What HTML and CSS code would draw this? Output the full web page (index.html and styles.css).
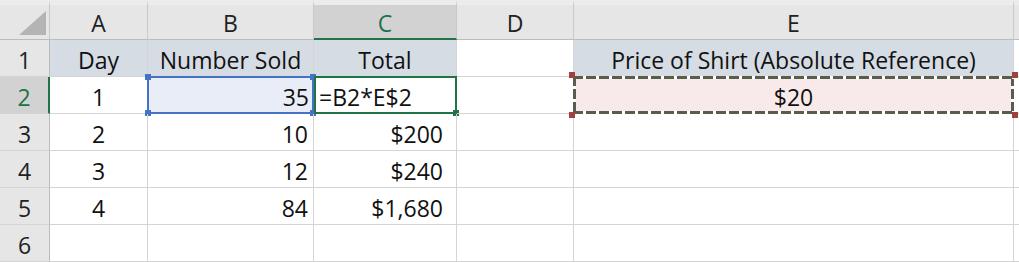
FILE: index.html
```
<!DOCTYPE html>
<html lang="en">
  <head>
    <meta charset="UTF-8" />
    <title>Shirt Sales</title>
    <link rel="stylesheet" href="styles.css">
  </head>
  <body>
    <div id="sheet">
      <div class="corner"><span class="tri"></span></div>
      <div class="colhead">A</div>
      <div class="colhead">B</div>
      <div class="colhead active">C</div>
      <div class="colhead">D</div>
      <div class="colhead">E</div>
      <div class="colhead"></div>

      <div class="rowhead">1</div>
      <div class="cell title center">Day</div>
      <div class="cell title center">Number Sold</div>
      <div class="cell title center">Total</div>
      <div class="cell"></div>
      <div class="cell title center">Price of Shirt (Absolute Reference)</div>
      <div class="cell"></div>

      <div class="rowhead active">2</div>
      <div class="cell center">1</div>
      <div class="cell num ref">35
        <span class="knob tl"></span><span class="knob tr"></span>
        <span class="knob bl"></span><span class="knob br"></span>
      </div>
      <div class="cell editing">=B2*E$2<span class="knob br"></span></div>
      <div class="cell"></div>
      <div class="cell center copied">$20
        <span class="knob tl"></span><span class="knob tr"></span>
        <span class="knob bl"></span><span class="knob br"></span>
      </div>
      <div class="cell"></div>

      <div class="rowhead">3</div>
      <div class="cell center">2</div>
      <div class="cell num">10</div>
      <div class="cell num money">$200</div>
      <div class="cell"></div>
      <div class="cell"></div>
      <div class="cell"></div>

      <div class="rowhead">4</div>
      <div class="cell center">3</div>
      <div class="cell num">12</div>
      <div class="cell num money">$240</div>
      <div class="cell"></div>
      <div class="cell"></div>
      <div class="cell"></div>

      <div class="rowhead">5</div>
      <div class="cell center">4</div>
      <div class="cell num">84</div>
      <div class="cell num money">$1,680</div>
      <div class="cell"></div>
      <div class="cell"></div>
      <div class="cell"></div>

      <div class="rowhead">6</div>
      <div class="cell"></div>
      <div class="cell"></div>
      <div class="cell"></div>
      <div class="cell"></div>
      <div class="cell"></div>
      <div class="cell"></div>
    </div>
  </body>
</html>
```

FILE: styles.css
```
  * {
    box-sizing: border-box;
  }
  body {
    margin: 0;
    background-color: white;
    font-family: "Open Sans", "Liberation Sans", sans-serif;
    font-size: 23px;
    color: #111;
  }
  #sheet {
    display: grid;
    grid-template-columns: 50px 98px 166px 143px 117px 440px 1fr;
    grid-template-rows: 40px repeat(6, 37px);
    width: 1019px;
    height: 262px;
    overflow: hidden;
    background-color: white;
  }
  .corner {
    background-color: #e6e6e6;
    border-top: 5px solid #ececec;
    border-right: 1px solid #c9c9c9;
    border-bottom: 1px solid #bcbcbc;
    display: flex;
    align-items: flex-end;
    justify-content: flex-end;
    padding: 0 3px 4px 0;
  }
  .tri {
    width: 27px;
    height: 24px;
    background-color: #b4b4b4;
    clip-path: polygon(100% 0, 100% 100%, 0 100%);
  }
  .colhead {
    background-color: #e6e6e6;
    border-top: 5px solid #ececec;
    border-right: 1px solid #c9c9c9;
    border-bottom: 1px solid #bcbcbc;
    display: flex;
    align-items: center;
    justify-content: center;
    padding-top: 2px;
    color: #222;
  }
  .colhead.active {
    background-color: #d2d2d2;
    color: #217346;
    border-bottom: 2px solid #217346;
  }
  .rowhead {
    background-color: #e6e6e6;
    border-right: 1px solid #bcbcbc;
    border-bottom: 1px solid #d4d4d4;
    display: flex;
    align-items: center;
    justify-content: center;
    padding-top: 3px;
    color: #222;
  }
  .rowhead.active {
    background-color: #d2d2d2;
    color: #217346;
    border-right: 2px solid #217346;
  }
  .cell {
    position: relative;
    border-right: 1px solid #d4d4d4;
    border-bottom: 1px solid #d4d4d4;
    display: flex;
    align-items: center;
    padding: 4px 5px 0 5px;
    white-space: nowrap;
  }
  .center {
    justify-content: center;
  }
  .num {
    justify-content: flex-end;
  }
  .money {
    padding-right: 13px;
  }
  .title {
    background-color: #d6dce4;
  }
  /* B2 highlighted as a reference of the formula being typed */
  .ref {
    background-color: #e9edf7;
    border: 2px solid #4472c4;
    margin: -1px 0 0 -1px;
    padding-right: 3px;
  }
  .ref .knob {
    background-color: #4472c4;
  }
  /* C2 is the cell being edited */
  .editing {
    border: 2px solid #217346;
    margin: -1px 0 0 0;
    padding-left: 3px;
  }
  .editing .knob {
    background-color: #217346;
  }
  /* E2 shows the marching ants of a copy */
  .copied {
    background-color: #f8eaea;
    margin: -1px 0 0 -1px;
    border: none;
  }
  .copied::before {
    content: "";
    position: absolute;
    inset: 0;
    background:
      repeating-linear-gradient(90deg, #585d4c 0 10px, white 10px 13px) top / 100% 3px no-repeat,
      repeating-linear-gradient(90deg, #585d4c 0 10px, white 10px 13px) bottom / 100% 3px no-repeat,
      repeating-linear-gradient(180deg, #585d4c 0 10px, white 10px 13px) left / 3px 100% no-repeat,
      repeating-linear-gradient(180deg, #585d4c 0 10px, white 10px 13px) right / 3px 100% no-repeat;
  }
  .copied .knob {
    background-color: #a43f3f;
    z-index: 1;
  }
  .knob {
    position: absolute;
    width: 6px;
    height: 6px;
  }
  .tl {
    top: -4px;
    left: -4px;
  }
  .tr {
    top: -4px;
    right: -4px;
  }
  .bl {
    bottom: -4px;
    left: -4px;
  }
  .br {
    bottom: -4px;
    right: -4px;
  }
```
